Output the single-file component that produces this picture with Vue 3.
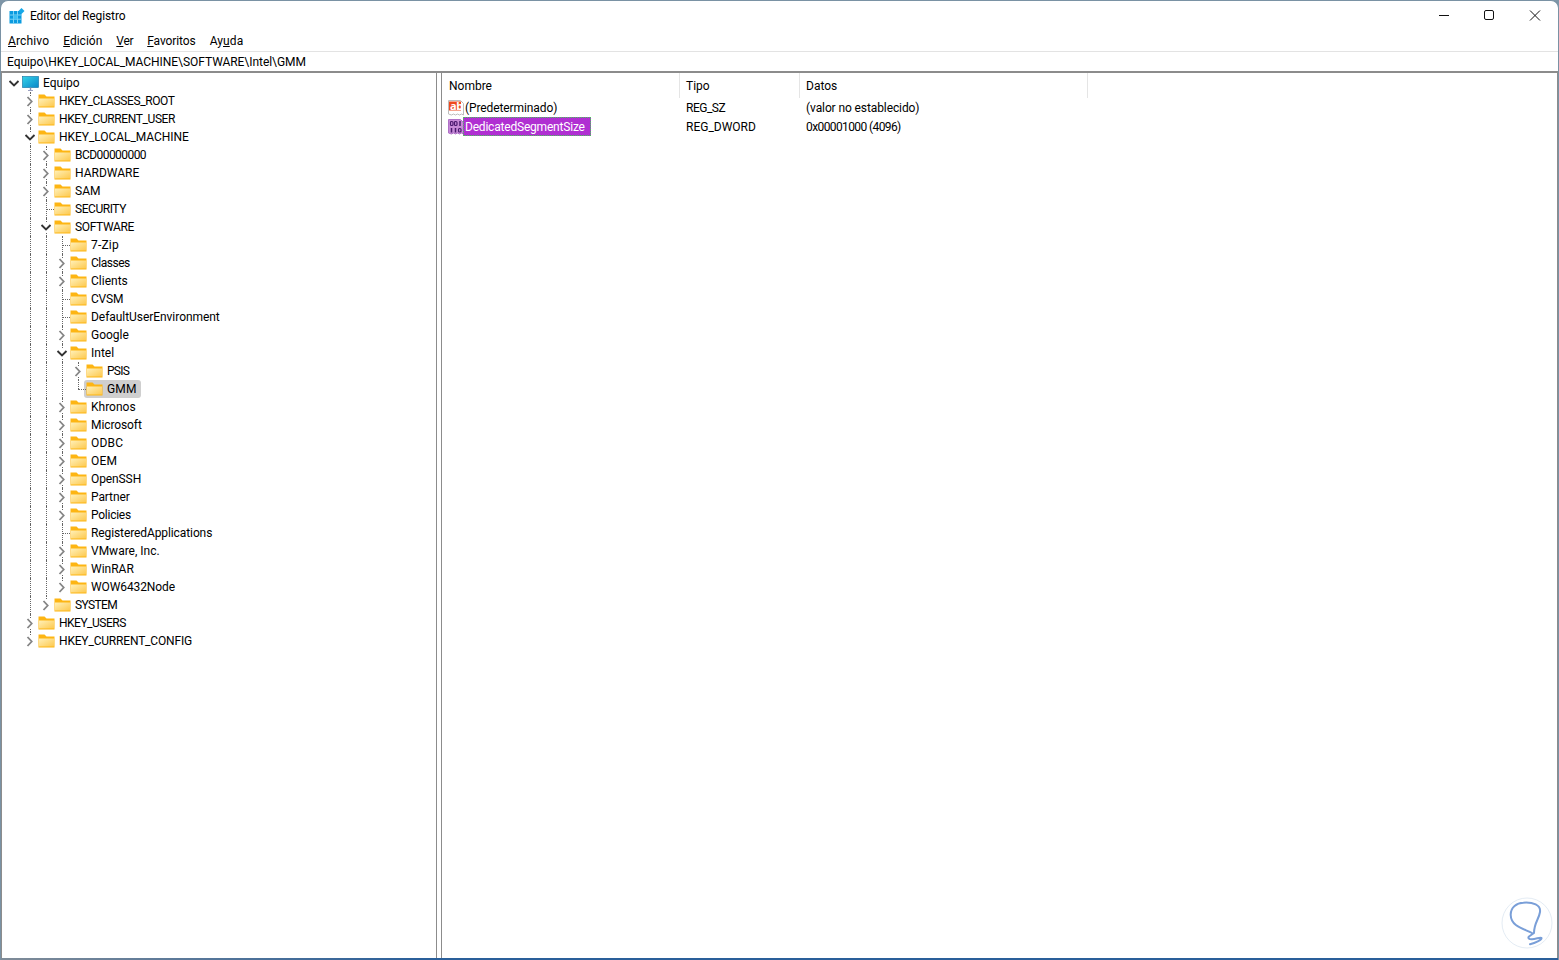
<script setup>
const rows = [
  { t: 'Equipo', l: 0, s: 'open', icon: 'pc', g: [] },
  { t: 'HKEY_CLASSES_ROOT', l: 1, s: 'closed', g: ['t'], sp: -0.4 },
  { t: 'HKEY_CURRENT_USER', l: 1, s: 'closed', g: ['t'], sp: -0.4 },
  { t: 'HKEY_LOCAL_MACHINE', l: 1, s: 'open', g: ['t'], sp: -0.05 },
  { t: 'BCD00000000', l: 2, s: 'closed', g: ['v', 't'], sp: -0.55 },
  { t: 'HARDWARE', l: 2, s: 'closed', g: ['v', 't'] },
  { t: 'SAM', l: 2, s: 'closed', g: ['v', 't'] },
  { t: 'SECURITY', l: 2, s: '', g: ['v', 't'], sp: -0.45 },
  { t: 'SOFTWARE', l: 2, s: 'open', g: ['v', 't'], sp: -0.35 },
  { t: '7-Zip', l: 3, s: '', g: ['v', 'v', 't'], sp: 0.2 },
  { t: 'Classes', l: 3, s: 'closed', g: ['v', 'v', 't'], sp: -0.5 },
  { t: 'Clients', l: 3, s: 'closed', g: ['v', 'v', 't'] },
  { t: 'CVSM', l: 3, s: '', g: ['v', 'v', 't'], sp: -0.2 },
  { t: 'DefaultUserEnvironment', l: 3, s: '', g: ['v', 'v', 't'], sp: -0.05 },
  { t: 'Google', l: 3, s: 'closed', g: ['v', 'v', 't'] },
  { t: 'Intel', l: 3, s: 'open', g: ['v', 'v', 't'] },
  { t: 'PSIS', l: 4, s: 'closed', g: ['v', 'v', 'v', 't'], sp: -0.7 },
  { t: 'GMM', l: 4, s: '', sel: true, g: ['v', 'v', 'v', 'e'], sp: 0.2 },
  { t: 'Khronos', l: 3, s: 'closed', g: ['v', 'v', 't'] },
  { t: 'Microsoft', l: 3, s: 'closed', g: ['v', 'v', 't'], sp: -0.1 },
  { t: 'ODBC', l: 3, s: 'closed', g: ['v', 'v', 't'], sp: 0.2 },
  { t: 'OEM', l: 3, s: 'closed', g: ['v', 'v', 't'], sp: 0.2 },
  { t: 'OpenSSH', l: 3, s: 'closed', g: ['v', 'v', 't'], sp: -0.1 },
  { t: 'Partner', l: 3, s: 'closed', g: ['v', 'v', 't'], sp: -0.1 },
  { t: 'Policies', l: 3, s: 'closed', g: ['v', 'v', 't'], sp: -0.25 },
  { t: 'RegisteredApplications', l: 3, s: '', g: ['v', 'v', 't'], sp: -0.1 },
  { t: 'VMware, Inc.', l: 3, s: 'closed', g: ['v', 'v', 't'] },
  { t: 'WinRAR', l: 3, s: 'closed', g: ['v', 'v', 't'] },
  { t: 'WOW6432Node', l: 3, s: 'closed', g: ['v', 'v', 'e'], sp: -0.1 },
  { t: 'SYSTEM', l: 2, s: 'closed', g: ['v', 'e'], sp: -0.6 },
  { t: 'HKEY_USERS', l: 1, s: 'closed', g: ['t'], sp: -0.5 },
  { t: 'HKEY_CURRENT_CONFIG', l: 1, s: 'closed', g: ['e'], sp: -0.18 },
]
const menus = [
  { p: ['A', 'rchivo'], sp: 0.15 },
  { p: ['E', 'dición'], sp: 0 },
  { p: ['V', 'er'], sp: -0.3 },
  { p: ['F', 'avoritos'], sp: -0.1 },
  { p: ['Ay', 'u', 'da'], sp: 0.1 },
]
const fid = (t) => 'f' + t.replace(/[^A-Za-z0-9]/g, '')
</script>

<template>
  <div class="window">
    <header class="titlebar">
      <svg class="appicon" width="16" height="16" viewBox="0 0 16 16">
        <rect x="0.5" y="3" width="12" height="12.5" fill="#0a9be0" />
        <path d="M4.5 3v12.500M8.500 3v12.500M.5 7h12M.5 11.200h12" stroke="#7fd4f5" stroke-width="1" />
        <rect x="4.500" y="7" width="4" height="4.200" fill="#3fc0f2" />
        <path d="M12.500 0l3 3-3 3-3-3z" fill="#16a8e8" />
      </svg>
      <span class="title">Editor del Registro</span>
      <div class="controls">
        <svg width="46" height="30" viewBox="0 0 46 30"><path d="M19 14.500h10" stroke="#111" fill="none" /></svg>
        <svg width="46" height="30" viewBox="0 0 46 30"><rect x="18.500" y="9.500" width="9" height="9" rx="1.500" stroke="#111" fill="none" /></svg>
        <svg width="46" height="30" viewBox="0 0 46 30"><path d="M18 9.500l10 10M28 9.500l-10 10" stroke="#111" fill="none" /></svg>
      </div>
    </header>

    <nav class="menubar">
      <span v-for="m in menus" :key="m.p[0]" class="menu" :style="{ letterSpacing: m.sp + 'px' }">
        <template v-if="m.p.length === 2"><u>{{ m.p[0] }}</u>{{ m.p[1] }}</template>
        <template v-else>{{ m.p[0] }}<u>{{ m.p[1] }}</u>{{ m.p[2] }}</template>
      </span>
    </nav>

    <div class="address">Equipo\HKEY_LOCAL_MACHINE\SOFTWARE\Intel\GMM</div>

    <main class="panes">
      <section class="tree">
        <div v-for="r in rows" :key="r.t" class="row">
          <span v-if="r.l > 0" class="cell"></span>
          <span v-for="(g, i) in r.g.slice(0, -1)" :key="i" class="cell g-v"></span>
          <span class="twisty" :class="[r.g.length ? 'g-' + r.g[r.g.length - 1] : '', { leaf: !r.s }]">
            <svg v-if="r.s === 'closed'" width="16" height="18" viewBox="0 0 16 18"><rect x="4" y="4" width="9" height="11" fill="#fff" /><path d="M5.500 5l4.200 4.500-4.200 4.500" stroke="#858585" stroke-width="1.800" fill="none" /></svg>
            <svg v-else-if="r.s === 'open'" width="16" height="18" viewBox="0 0 16 18"><rect x="3" y="5" width="11" height="9" fill="#fff" /><path d="M3.500 7l4.500 4.500 4.500-4.500" stroke="#333" stroke-width="1.900" fill="none" /></svg>
          </span>
          <span class="item" :class="{ sel: r.sel }">
            <svg v-if="r.icon === 'pc'" class="icon" width="17" height="18" viewBox="0 0 17 18">
              <defs>
                <linearGradient id="scr" x1="0" y1="0" x2="1" y2="1">
                  <stop offset="0" stop-color="#35d3e8" />
                  <stop offset="1" stop-color="#0a86c8" />
                </linearGradient>
              </defs>
              <rect x="0.500" y="2.500" width="16" height="11" fill="url(#scr)" stroke="#0b6f9e" stroke-width="0.600" />
              <path d="M8.500 13.500v2.500" stroke="#8a8fb0" stroke-width="1.400" />
              <path d="M6 16.500h5" stroke="#9a9fc0" />
            </svg>
            <svg v-else class="icon" width="17" height="18" viewBox="0 0 17 18">
              <defs>
                <linearGradient :id="fid(r.t)" x1="0" y1="0" x2="1" y2="1">
                  <stop offset="0" stop-color="#fff0b8" />
                  <stop offset="1" stop-color="#fdc94f" />
                </linearGradient>
              </defs>
              <path d="M.5 2.500h6l2 2h8v11H.5z" fill="#fdb513" />
              <path d="M1 6.500h15v8H1z" :fill="'url(#' + fid(r.t) + ')'" />
            </svg>
            <span class="label" :style="{ letterSpacing: (r.sp || 0) + 'px' }">{{ r.t }}</span>
          </span>
        </div>
      </section>

      <div class="splitter"></div>

      <section class="list">
        <div class="head">
          <span class="col c1">Nombre</span>
          <span class="col c2">Tipo</span>
          <span class="col c3">Datos</span>
        </div>
        <div class="vrow">
          <span class="vname">
            <svg class="vicon" width="16" height="16" viewBox="0 0 16 16">
              <path d="M.5.5h12l3 3v11.500l-2-1-2 1-2-1-2 1-2-1-2 1-3-1z" fill="#fff" stroke="#bdbdbd" />
              <rect x="1" y="1.500" width="12" height="9" fill="#ee4a1e" />
            </svg>
            <span class="ab">ab</span>
            <span class="vtext">(Predeterminado)</span>
          </span>
          <span class="vtype narrow-s">REG_SZ</span>
          <span class="vdata">(valor no establecido)</span>
        </div>
        <div class="vrow">
          <span class="vname">
            <svg class="vicon" width="16" height="16" viewBox="0 0 16 16">
              <path d="M.5.5h12l3 3v11.500l-2-1-2 1-2-1-2 1-2-1-2 1-3-1z" fill="#c78ad8" stroke="#b070c8" />
              <rect x="2.500" y="2.500" width="2.500" height="4" rx="1" fill="none" stroke="#4b1a70" stroke-width="1.200" />
              <rect x="6.500" y="2.500" width="2.500" height="4" rx="1" fill="none" stroke="#4b1a70" stroke-width="1.200" />
              <path d="M12 2v5M3.500 9v4.500M7.500 9v4.500" stroke="#4b1a70" stroke-width="1.500" />
              <rect x="10.500" y="9.500" width="2.500" height="3.500" rx="1" fill="none" stroke="#4b1a70" stroke-width="1.200" />
            </svg>
            <span class="vtext selected">DedicatedSegmentSize</span>
          </span>
          <span class="vtype">REG_DWORD</span>
          <span class="vdata narrow-d">0x00001000 (4096)</span>
        </div>
      </section>
    </main>

    <svg class="badge" width="52" height="52" viewBox="0 0 52 52">
      <circle cx="26" cy="26" r="25" fill="#fff" stroke="#e4ecf4" />
      <path d="M31 36C24 32 10 30 9.700 18 9.500 10 16 6 22.300 5.700 32 5 40 8 39 15 38 22 33 26 33 36L28 39.500C26.500 41 28 42.500 31 42.300 35 42 40 40 40.500 41 41 43 34 46 29 47.300" fill="none" stroke="#7a9fd8" stroke-width="2" stroke-linecap="round" stroke-linejoin="round" />
    </svg>
  </div>
</template>

<style>
html, body { margin: 0; background: #7f96a8; }
</style>

<style scoped>
.window {
  position: relative;
  box-sizing: border-box;
  width: 1559px;
  height: 960px;
  background: #fff;
  border: 1px solid #7a92a4;
  border-bottom: 0;
  padding-bottom: 2px;
  border-radius: 8px 8px 0 0;
  font: 12px/16px Roboto, "Noto Sans", sans-serif;
  color: #000;
  overflow: hidden;
  display: flex;
  flex-direction: column;
}
.window::after {
  content: "";
  position: absolute;
  left: 0;
  right: 0;
  bottom: 0;
  height: 2px;
  background: linear-gradient(90deg, #808c98, #2a5f9a 420px);
}
.titlebar {
  height: 29px;
  display: flex;
  align-items: center;
  padding-left: 8px;
  flex: none;
}
.appicon { margin-right: 5px; }
.title { flex: 1; letter-spacing: -0.1px; }
.controls { display: flex; }
.controls svg { display: block; }
.menubar {
  height: 21px;
  display: flex;
  align-items: center;
  padding-left: 7px;
  gap: 14px;
  flex: none;
}
.address {
  height: 19px;
  line-height: 21px;
  padding-left: 6px;
  letter-spacing: -0.05px;
  border-top: 1px solid #e3e3e3;
  border-bottom: 2px solid #8c8c8c;
  flex: none;
}
.panes {
  flex: 1;
  display: flex;
  min-height: 0;
}
.tree {
  flex: none;
  width: 436px;
  padding: 1px 0 0 4px;
  box-sizing: border-box;
  border-left: 1px solid #8c8c8c;
  border-right: 1px solid #8c8c8c;
}
.splitter { width: 4px; flex: none; background: #fff; }
.list {
  flex: 1;
  border-left: 1px solid #8c8c8c;
  border-right: 1px solid #8c8c8c;
  min-width: 0;
}
.row { display: flex; height: 18px; align-items: stretch; }
.cell { width: 16px; flex: none; position: relative; }
.g-v::before, .g-t::before, .g-e::before {
  content: "";
  position: absolute;
  left: 8px;
  top: 0;
  bottom: 0;
  border-left: 1px dotted #666;
}
.g-e::before { bottom: 9px; }
.leaf::after {
  content: "";
  position: absolute;
  left: 8px;
  right: 0;
  top: 9px;
  border-top: 1px dotted #666;
}
.twisty { width: 16px; height: 18px; flex: none; position: relative; }
.twisty svg { display: block; position: relative; }
.item {
  display: flex;
  align-items: center;
  height: 18px;
}
.icon { display: block; flex: none; }
.label { margin-left: 4px; padding-right: 3px; white-space: nowrap; }
.item.sel { background: #cfcfcf; border-radius: 3px; margin-left: -2px; padding-left: 2px; padding-right: 1px; }
.head {
  display: flex;
  height: 25px;
  align-items: center;
  line-height: 27px;
}
.col {
  box-sizing: border-box;
  padding-left: 7px;
  height: 25px;
  border-right: 1px solid #e5e5e5;
}
.c1 { width: 238px; }
.c2 { width: 120px; padding-left: 6px; }
.c3 { width: 288px; padding-left: 6px; }
.vrow {
  display: flex;
  height: 19px;
  align-items: center;
}
.vname {
  width: 238px;
  display: flex;
  align-items: center;
  padding-left: 6px;
  box-sizing: border-box;
  position: relative;
}
.vicon { flex: none; display: block; }
.ab {
  position: absolute;
  left: 8px;
  top: 0;
  color: #fff;
  font-family: "Noto Sans", sans-serif;
  font-weight: 700;
  font-size: 11px;
  line-height: 12px;
  letter-spacing: -0.3px;
}
.vtext { margin-left: 0; padding: 0 1px; white-space: nowrap; letter-spacing: -0.1px; }
.vtext.selected {
  background: #b02fd2;
  color: #fff;
  padding: 0 6px 0 2px;
  margin-left: -1px;
  height: 19px;
  line-height: 21px;
  letter-spacing: -0.2px;
  box-sizing: border-box;
  outline: 1px dotted #3fcf4f;
  outline-offset: -1px;
}
.vtype { width: 120px; padding-left: 6px; box-sizing: border-box; }
.narrow-s { letter-spacing: -0.5px; }
.vdata { padding-left: 6px; letter-spacing: -0.1px; }
.vdata.narrow-d { letter-spacing: -0.6px; }
.badge { position: absolute; right: 5px; bottom: 11px; }
</style>
